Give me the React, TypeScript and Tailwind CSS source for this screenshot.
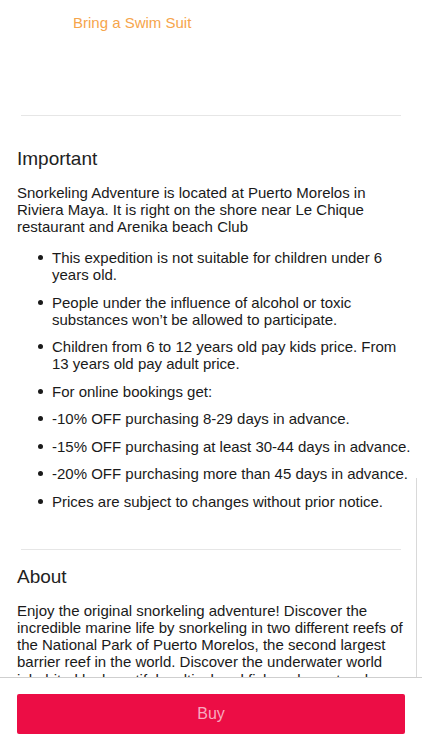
import React from 'react';

const bullets = [
  'This expedition is not suitable for children under 6 years old.',
  'People under the influence of alcohol or toxic substances won’t be allowed to participate.',
  'Children from 6 to 12 years old pay kids price. From 13 years old pay adult price.',
  'For online bookings get:',
  '-10% OFF purchasing 8-29 days in advance.',
  '-15% OFF purchasing at least 30-44 days in advance.',
  '-20% OFF purchasing more than 45 days in advance.',
  'Prices are subject to changes without prior notice.',
];

const App: React.FC = () => {
  return (
    <div
      className="relative flex flex-col w-[422px] h-[750px] bg-white overflow-hidden text-[#1a1a1a]"
      style={{ fontFamily: '"Liberation Sans", Arial, sans-serif' }}
    >
      {/* Scrolling content */}
      <div className="flex-1 overflow-hidden">
        <div className="pt-[14px] pl-[73px] text-[15px] leading-[18px] text-[#f6a54c]">
          Bring a Swim Suit
        </div>

        <div className="mt-[83px] mx-[21px] h-px bg-[#e6e6e6]" />

        {/* Important */}
        <section className="px-[17px]">
          <h2 className="mt-[31px] text-[19px] leading-[24px] text-[#222]">Important</h2>
          <p className="mt-[13px] text-[15px] leading-[17px]">
            Snorkeling Adventure is located at Puerto Morelos in Riviera Maya. It is right on the shore near Le Chique
            restaurant and Arenika beach Club
          </p>
          <ul className="mt-[14px] mr-[-12px] flex flex-col gap-[10.5px]">
            {bullets.map((b) => (
              <li key={b} className="flex text-[15px] leading-[17px]">
                <span className="w-[35px] shrink-0 flex justify-end pr-[9px] pt-[6px]">
                  <span className="block w-[5px] h-[5px] rounded-full bg-[#1a1a1a]" />
                </span>
                <span className={b.startsWith('This') ? 'pr-[20px]' : ''}>{b}</span>
              </li>
            ))}
          </ul>
        </section>

        <div className="mt-[39px] mx-[21px] h-px bg-[#e6e6e6]" />

        {/* About */}
        <section className="px-[17px]">
          <h2 className="mt-[15px] text-[19px] leading-[24px] text-[#222]">About</h2>
          <p className="mt-[13px] text-[15px] leading-[17.3px]">
            Enjoy the original snorkeling adventure! Discover the incredible marine life by snorkeling in two different
            reefs of the National Park of Puerto Morelos, the second largest barrier reef in the world. Discover the
            underwater world inhabited by beautiful multicolored fish and spectacular coral formations.
          </p>
        </section>
      </div>

      {/* Scroll indicator */}
      <div className="absolute right-[5px] top-[478px] w-px h-[199px] bg-[#d9d9d9]" />

      {/* Bottom bar */}
      <div className="shrink-0 h-[73px] border-t border-[#cfcfcf] bg-white px-[17px] pt-[16px]">
        <button className="w-full h-[40px] rounded-[2px] bg-[#ec0d45] text-[16px] text-[#f8a9bf]">Buy</button>
      </div>
    </div>
  );
};

export default App;
